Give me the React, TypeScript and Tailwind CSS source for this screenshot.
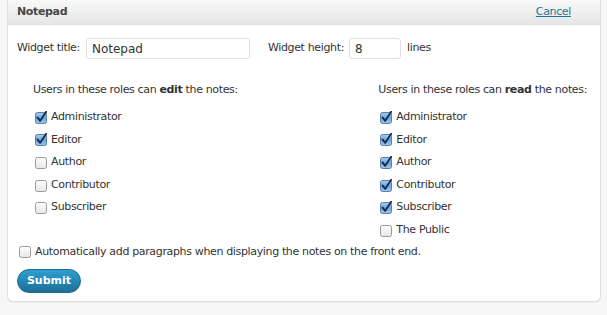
import React from "react";

function Box({ checked }: { checked: boolean }) {
  return (
    <svg width="12" height="13" viewBox="0 0 12 13" className="shrink-0">
      <defs>
        <linearGradient id="cb-on" x1="0" y1="0" x2="0" y2="1">
          <stop offset="0" stopColor="#a9cdf0" />
          <stop offset="0.5" stopColor="#6aa6df" />
          <stop offset="1" stopColor="#9cc8f0" />
        </linearGradient>
        <linearGradient id="cb-off" x1="0" y1="0" x2="0" y2="1">
          <stop offset="0" stopColor="#ffffff" />
          <stop offset="1" stopColor="#e6e6e6" />
        </linearGradient>
      </defs>
      <rect
        x="0.5"
        y="1.5"
        width="11"
        height="11"
        rx="2"
        fill={checked ? "url(#cb-on)" : "url(#cb-off)"}
        stroke={checked ? "#5b7fa6" : "#9a9a9a"}
      />
      {checked && (
        <path d="M2.6 6.6 L5.2 9.8 L11.2 0.8" fill="none" stroke="#1a2a4a" strokeWidth="1.9" strokeLinecap="round" strokeLinejoin="round" />
      )}
    </svg>
  );
}

function Row({ label, checked }: { label: string; checked: boolean }) {
  return (
    <div className="flex items-center gap-[4px] h-[22.6px]">
      <Box checked={checked} />
      <span>{label}</span>
    </div>
  );
}

export default function App() {
  const font = { fontFamily: '"DejaVu Sans", "Lucida Grande", Verdana, sans-serif' };
  return (
    <div className="w-[607px] h-[315px] bg-[#f6f6f6] pl-[7px] pr-[6px] overflow-hidden text-[11px] tracking-[-0.35px] text-[#333]" style={font}>
      <div className="bg-white border border-t-0 border-[#dfdfdf] rounded-b-[6px] h-[302px] shadow-[0_1px_0_#ececec]">
        <div className="h-[25px] bg-gradient-to-b from-[#f9f9f9] to-[#e6e6e6] border-b border-[#dfdfdf] flex items-center justify-between pl-[9px] pr-[29px]">
          <span className="font-bold text-[11px] text-[#464646]">Notepad</span>
          <span className="underline text-[#21759b] text-[11px]">Cancel</span>
        </div>
        <div className="flex items-center mt-[13px] pl-[9px]">
          <span>Widget title:</span>
          <div className="ml-[6px] w-[164px] h-[21px] border border-[#dfdfdf] rounded-[3px] flex items-center pl-[5px] text-[12px] tracking-normal text-[#333]">Notepad</div>
          <span className="ml-[18px]">Widget height:</span>
          <div className="ml-[5px] w-[52px] h-[21px] border border-[#dfdfdf] rounded-[3px] flex items-center pl-[5px] text-[12px] tracking-normal text-[#333]">8</div>
          <span className="ml-[6px]">lines</span>
        </div>
        <div className="flex justify-between mt-[23px] pl-[25px] pr-[13px]">
          <div>
            <div className="h-[16px] leading-[16px]">
              Users in these roles can <b>edit</b> the notes:
            </div>
            <div className="mt-[8px] pl-[2px]">
              <Row label="Administrator" checked />
              <Row label="Editor" checked />
              <Row label="Author" checked={false} />
              <Row label="Contributor" checked={false} />
              <Row label="Subscriber" checked={false} />
            </div>
          </div>
          <div>
            <div className="h-[16px] leading-[16px]">
              Users in these roles can <b>read</b> the notes:
            </div>
            <div className="mt-[8px] pl-[2px]">
              <Row label="Administrator" checked />
              <Row label="Editor" checked />
              <Row label="Author" checked />
              <Row label="Contributor" checked />
              <Row label="Subscriber" checked />
              <Row label="The Public" checked={false} />
            </div>
          </div>
        </div>
        <div className="pl-[11px] -mt-[1px]">
          <Row label="Automatically add paragraphs when displaying the notes on the front end." checked={false} />
        </div>
        <div className="pl-[9px] mt-[6px]">
          <div className="inline-flex items-center justify-center w-[64px] h-[24px] rounded-full bg-gradient-to-b from-[#2e9fd2] to-[#1e6f98] border border-[#1a6a92] text-white font-bold text-[11px] tracking-normal">
            Submit
          </div>
        </div>
      </div>
    </div>
  );
}
